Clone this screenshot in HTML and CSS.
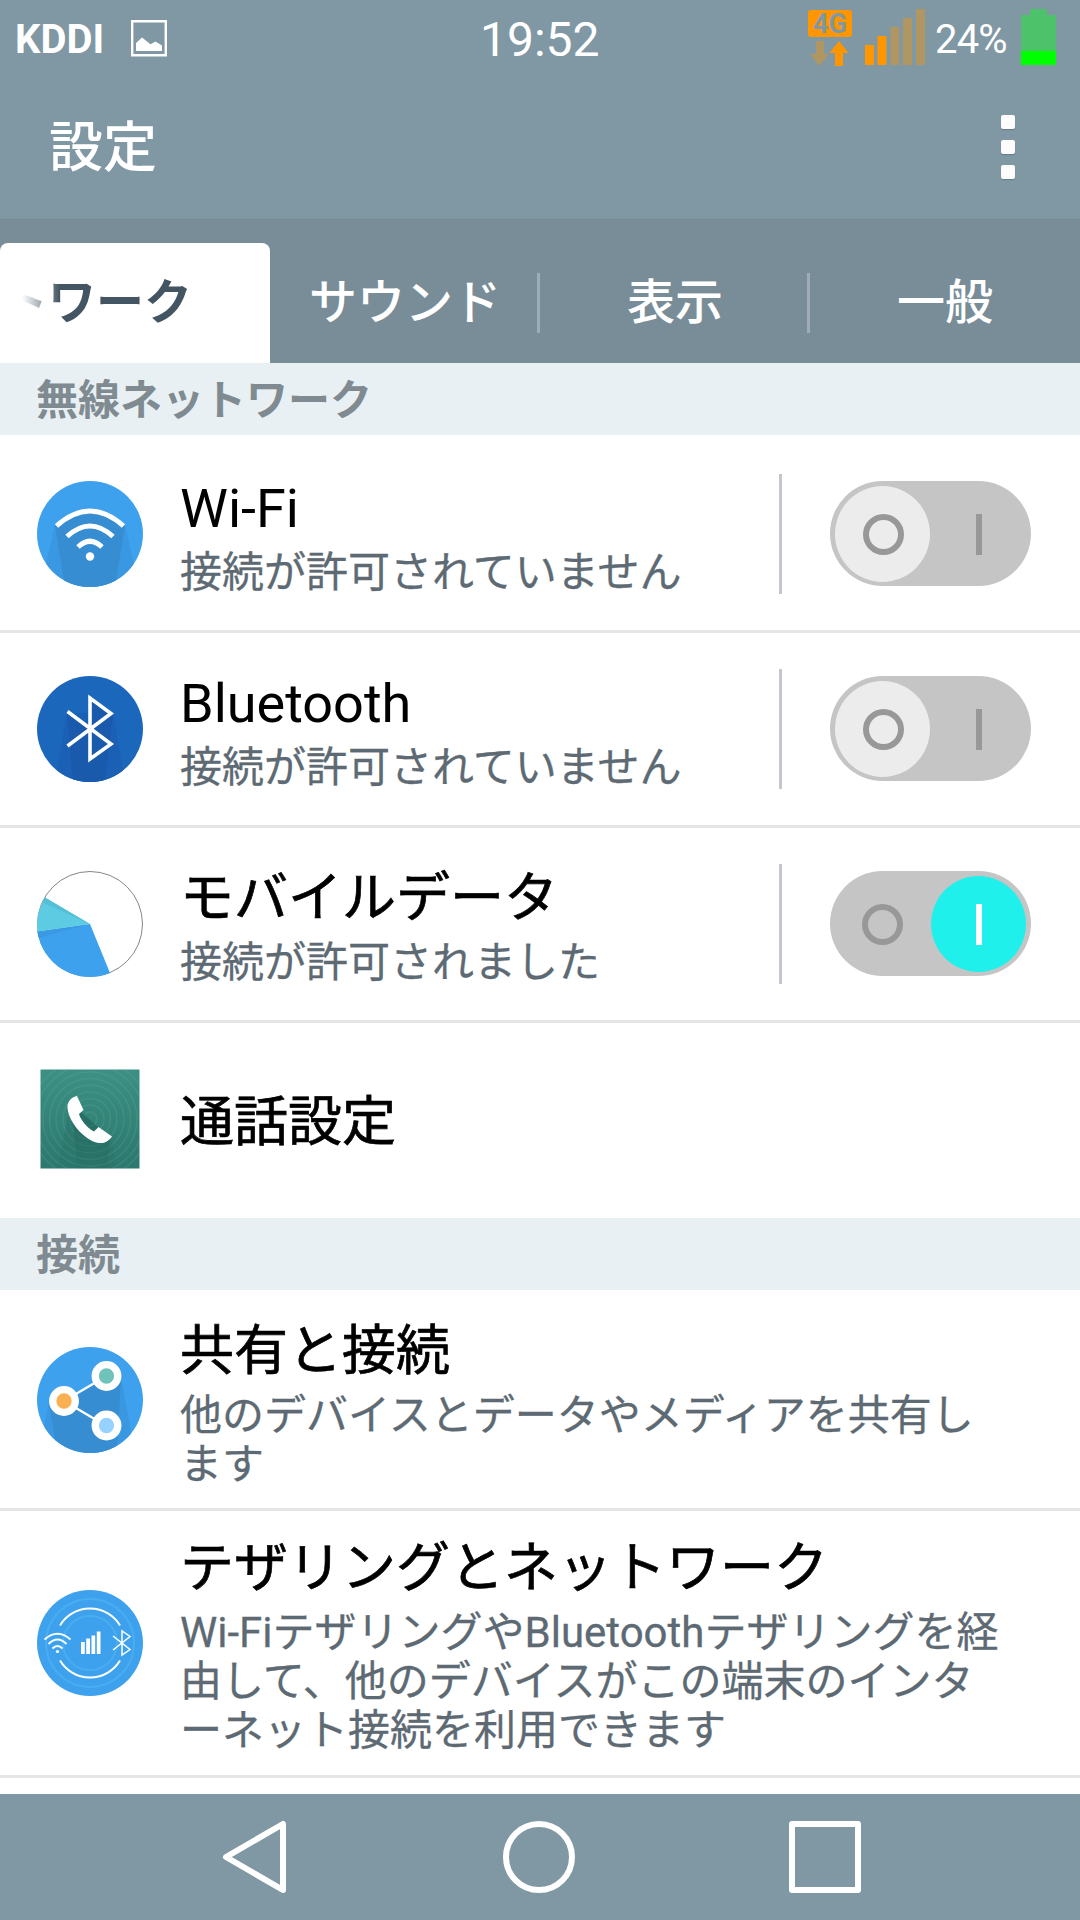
FILE: index.html
```html
<!DOCTYPE html>
<html lang="ja">
<head>
<meta charset="utf-8">
<title>設定</title>
<link rel="stylesheet" href="styles.css">
</head>
<body>
<div class="screen">
  <header class="top">
    <div class="status">
      <span class="carrier">KDDI</span>
      <svg class="picture" width="36" height="37" viewBox="0 0 36 37"><path d="M1.2 1.2H34.8V35.3H1.2Z" fill="none" stroke="#fff" stroke-width="2.4"/><path d="M5 31V23L11 17.5L19.5 24.2L24.5 21.5L31 25.5V31Z" fill="#fff"/></svg>
      <span class="clock">19:52</span>
      <div class="network">
        <span class="badge">4G</span>
        <svg width="40" height="25" viewBox="0 0 40 25"><path d="M6 0H14V13H19L9.500 25L0 13H6Z" fill="#b09663"/><path d="M29 0L38.500 12H33V25H25V12H19.500Z" fill="#ff9600"/></svg>
      </div>
      <svg class="signal" width="60" height="56" viewBox="0 0 60 56"><path d="M0 36H9V56H0ZM12.500 27H21.500V56H12.500Z" fill="#ff9600"/><path d="M25.500 18H34.300V56H25.500ZM38 9H47V56H38ZM51 0H60V56H51Z" fill="#b09663"/></svg>
      <span class="percent">24%</span>
      <svg class="battery" width="35" height="56" viewBox="0 0 35 56"><path d="M9 0H26V6H35V42H0V6H9Z" fill="#4dc26b"/><path d="M0 42H35V56H0Z" fill="#0f0"/></svg>
    </div>
    <div class="titlebar">
      <h1>設定</h1>
      <div class="more"><i></i><i></i><i></i></div>
    </div>
  </header>

  <nav class="tabs">
    <div class="tab active"><span>トワーク</span></div>
    <div class="tab split">サウンド</div>
    <div class="tab split">表示</div>
    <div class="tab">一般</div>
  </nav>

  <main class="list">
    <h2 class="section">無線ネットワーク</h2>
    <div class="row first">
      <svg class="icon" viewBox="0 0 106 106">
        <defs><clipPath id="disc"><circle cx="53" cy="53" r="53"/></clipPath></defs>
        <g clip-path="url(#disc)"><path d="M0 0H106V106H0Z" fill="#3da1ee"/><path d="M18 44L4 106H102L88 44Z" fill="#3998e1"/><path d="M18 44Q53 14 88 44L78 106H28Z" fill="#368dd2"/></g>
        <g fill="none" stroke="#fff" stroke-width="5"><path d="M19.500 45Q53 15 86.500 45"/><path d="M30 55.500Q53 34.500 76 55.500"/><path d="M41 66Q53 54.500 65 66"/></g><circle cx="53" cy="75.500" r="4.200" fill="#fff"/>
      </svg>
      <div class="text"><div class="name latin">Wi-Fi</div><div class="desc">接続が許可されていません</div></div>
      <div class="control"><div class="switch"><span class="knob"></span><span class="ring"></span><span class="bar"></span></div></div>
    </div>
    <div class="row">
      <svg class="icon" viewBox="0 0 106 106">
        <g clip-path="url(#disc)"><path d="M0 0H106V106H0Z" fill="#1b67bc"/><path d="M30 37L18 106H88L76 37Z" fill="#1a60b4"/><path d="M30 37L53 53V20L76 37L68 106H36Z" fill="#195aac"/></g>
        <path d="M30.500 35.500L74 68L53 83V22L74 37.500L30.500 70" fill="none" stroke="#fff" stroke-width="3.600"/>
      </svg>
      <div class="text"><div class="name latin">Bluetooth</div><div class="desc">接続が許可されていません</div></div>
      <div class="control"><div class="switch"><span class="knob"></span><span class="ring"></span><span class="bar"></span></div></div>
    </div>
    <div class="row">
      <svg class="icon" viewBox="0 0 106 106">
        <circle cx="53" cy="53" r="52.500" fill="#fff" stroke="#80868c"/>
        <path d="M53 53L.4 60.500A53 53 0 0 0 73 102Z" fill="#3da1ee"/><path d="M53 53L.4 60.500L1.800 67Z" fill="#3b99e3"/>
        <path d="M53 53L.4 60.500A53 53 0 0 1 8 26.500Z" fill="#5dcce3"/><path d="M53 53L8 26.500L5.500 31.500Z" fill="#55bfd6"/>
      </svg>
      <div class="text"><div class="name">モバイルデータ</div><div class="desc">接続が許可されました</div></div>
      <div class="control"><div class="switch on"><span class="knob"></span><span class="ring"></span><span class="bar"></span></div></div>
    </div>
    <div class="row single">
      <svg class="icon" viewBox="0 0 106 106">
        <defs><linearGradient id="teal" x2="0" y2="1"><stop stop-color="#3d9184"/><stop offset="1" stop-color="#2b776d"/></linearGradient><linearGradient id="shade" x2="0" y2="1"><stop stop-color="#1e5f57" stop-opacity=".6"/><stop offset="1" stop-color="#1e5f57" stop-opacity=".15"/></linearGradient><clipPath id="tile"><path d="M3.500 3.500H102.500V102.500H3.500Z"/></clipPath></defs>
        <g clip-path="url(#tile)"><path d="M0 0H106V106H0Z" fill="url(#teal)"/>
        <g fill="none" stroke="#75b5a8" stroke-opacity=".2" stroke-width="1.500"><circle cx="53" cy="53" r="7"/><circle cx="53" cy="53" r="14"/><circle cx="53" cy="53" r="20.500"/><circle cx="53" cy="53" r="27"/><circle cx="53" cy="53" r="34"/><circle cx="53" cy="53" r="40.500"/><circle cx="53" cy="53" r="47"/><circle cx="53" cy="53" r="54"/><circle cx="53" cy="53" r="60"/></g>
        <path d="M31 50L20 103H80L74 72L44 46Z" fill="url(#shade)" opacity=".5"/><path d="M36 56L40 103H70L73 72L44 46Z" fill="url(#shade)" opacity=".8"/></g>
        <path d="M40 30L46.500 44L42 48C44 55 51 62.500 57 65.500L61.500 61L75 70.500C71 76 67 77.500 62 77C47 75 30 54 30.500 40C30.800 35 35 31 40 30Z" fill="#fff"/>
      </svg>
      <div class="text"><div class="name">通話設定</div></div>
    </div>
    <h2 class="section">接続</h2>
    <div class="row share">
      <svg class="icon" viewBox="0 0 106 106">
        <g clip-path="url(#disc)"><path d="M0 0H106V106H0Z" fill="#3da1ee"/><path d="M12 55L5 90L50 106H98L84 30Z" fill="#3998e1"/><path d="M12 55L20 106H80L84 30Q75 38 55 37L27 55Z" fill="#368dd2"/></g>
        <path d="M69.500 29L27 54L69.500 79" fill="none" stroke="#fff" stroke-width="2.300"/>
        <g stroke="#fff" stroke-width="7.300"><circle cx="69.500" cy="29" r="11.300" fill="#70c3bb"/><circle cx="27" cy="54" r="11.300" fill="#f8b053"/><circle cx="69.500" cy="78.500" r="11.300" fill="#96d1ff"/></g>
      </svg>
      <div class="text"><div class="name">共有と接続</div><div class="desc">他のデバイスとデータやメディアを共有し<br>ます</div></div>
    </div>
    <div class="row tether">
      <svg class="icon" viewBox="0 0 106 106">
        <circle cx="53" cy="53" r="53" fill="#3da1ee"/><g fill="none" stroke="#49adf0" stroke-width="2"><circle cx="53" cy="53" r="44"/><circle cx="53" cy="53" r="27"/></g>
        <g fill="none" stroke="#fff" stroke-width="2"><path d="M23 35.500A35 35 0 0 1 83 35.500M23 70.500A35 35 0 0 0 83 70.500"/><path d="M7.500 49.500Q20.500 38 33.500 49.500M11.500 54Q20.500 45 29.500 54M15.500 58.500Q20.500 53.500 25.500 58.500"/></g>
        <circle cx="20.500" cy="61.500" r="1.600" fill="#fff"/>
        <path d="M44 52H47.800V64H44ZM49.200 48.500H53V64H49.200ZM54.500 45.500H58.200V64H54.500ZM59.800 41.500H63.500V64H59.800Z" fill="#fff"/>
        <path d="M76 46L93 59.500L85 65V41L93 46.500L76 60" fill="none" stroke="#fff" stroke-width="1.500"/>
      </svg>
      <div class="text"><div class="name">テザリングとネットワーク</div><div class="desc">Wi-FiテザリングやBluetoothテザリングを経<br>由して、他のデバイスがこの端末のインタ<br>ーネット接続を利用できます</div></div>
    </div>
  </main>

  <footer class="softkeys">
    <svg width="72" height="78" viewBox="0 0 72 78"><path d="M62 6V72L5 39Z" fill="none" stroke="#fff" stroke-width="6" stroke-linejoin="round"/></svg>
    <svg width="72" height="78" viewBox="0 0 72 78"><circle cx="36" cy="39" r="33" fill="none" stroke="#fff" stroke-width="6"/></svg>
    <svg width="72" height="78" viewBox="0 0 72 78"><path d="M3 6H69V72H3Z" fill="none" stroke="#fff" stroke-width="6" stroke-linejoin="round"/></svg>
  </footer>
</div>
</body>
</html>
```
FILE: styles.css
```css
* { box-sizing: border-box; }
body { margin: 0; background: #fff; font-family: Roboto, "Noto Sans CJK JP", sans-serif; }
.screen { width: 1080px; height: 1920px; display: flex; flex-direction: column; overflow: hidden; }
svg { display: block; flex: none; }
h1, h2 { margin: 0; }

.top { height: 219px; flex: none; background: #8097a4; color: #fff; }
.status { height: 76px; display: flex; align-items: flex-start; padding-left: 15px; white-space: nowrap; }
.carrier { font-size: 40px; line-height: 48px; font-weight: 700; margin-top: 16px; width: 116px; }
.picture { margin-top: 20px; }
.clock { font-size: 48px; line-height: 56px; margin: 12px 0 0 313px; width: 122px; }
.network { margin: 10px 0 0 206px; width: 44px; display: flex; flex-direction: column; align-items: center; gap: 4px; }
.badge { width: 44px; height: 27px; border-radius: 3px; background: #ff9600; color: #8097a4; font-size: 27px; line-height: 28px; font-weight: 700; text-align: center; }
.signal { margin: 9px 0 0 13px; }
.percent { font-size: 40px; line-height: 48px; margin: 16px 0 0 10px; width: 86px; letter-spacing: -.8px; }
.battery { margin-top: 9px; }
.titlebar { height: 143px; display: flex; justify-content: space-between; padding: 30px 65px 0 49px; }
h1 { font-size: 54px; line-height: 78px; font-weight: 500; padding-top: 4px; }
.more { display: flex; flex-direction: column; gap: 11px; padding-top: 9px; }
.more i { width: 14px; height: 14px; border-radius: 2px; background: #fcfcfc; box-shadow: 0 1px 1px #657b87; }

.tabs { height: 144px; flex: none; display: grid; grid-template-columns: repeat(4, 270px); padding-top: 24px; background: #788d98; box-shadow: inset 0 1px #758a95; }
.tab { display: flex; align-items: center; justify-content: center; color: #fff; font-size: 48px; line-height: 60px; font-weight: 500; }
.tab.split { background: linear-gradient(#9eacb6, #9eacb6) right 30px / 3px 60px no-repeat; }
.tab.active { background: #fff; color: #435562; border-radius: 8px 8px 0 0; font-weight: 700; justify-content: flex-start; }
.tab.active span { -webkit-mask-image: linear-gradient(90deg, transparent 22px, #000 60px); mask-image: linear-gradient(90deg, transparent 22px, #000 60px); }

.list { height: 1431px; flex: none; overflow: hidden; }
.section { height: 72px; background: #e8f0f4; color: #7f8b90; font-size: 42px; line-height: 75px; font-weight: 700; padding-left: 36px; }
.row { height: 195px; border-bottom: 3px solid #e5e5e5; display: flex; align-items: center; padding: 0 49px 0 37px; }
.row.first { height: 198px; padding-top: 2px; }
.row.single { border-bottom: 0; padding-bottom: 3px; }
.row.share { height: 221px; padding-top: 1px; }
.row.tether { height: 267px; }
.icon { width: 106px; height: 106px; margin-right: 37px; }
.text { flex: 1; white-space: nowrap; padding-top: 6px; }
.first .text { padding-top: 7px; }
.share .text { padding-top: 9px; }
.name { color: #000; font-size: 54px; line-height: 63px; -webkit-text-stroke: .7px #000; }
.name.latin { -webkit-text-stroke: 0; }
.desc { color: #5d6a73; font-size: 42px; line-height: 49px; margin-top: 8px; -webkit-text-stroke: .3px #5d6a73; }
.control { height: 120px; width: 252px; border-left: 3px solid #c4c8cc; display: flex; align-items: flex-start; justify-content: flex-end; padding-top: 7px; }
.switch { position: relative; width: 201px; height: 105px; border-radius: 53px; background: #c5c5c5; }
.knob { position: absolute; left: 5px; top: 5px; width: 95px; height: 96px; border-radius: 50%; background: #ececec; }
.ring { position: absolute; left: 33px; top: 33px; width: 41px; height: 41px; border: 6px solid #989898; border-radius: 50%; }
.bar { position: absolute; left: 146px; top: 33px; width: 6px; height: 41px; background: #989898; }
.on .knob { left: 101px; background: #1ff0eb; }
.on .ring { left: 32px; }
.on .bar { background: #fff; }

.softkeys { flex: 1; background: #8097a4; display: grid; grid-template-columns: 282px 286px 72px; align-items: center; padding-left: 221px; }
```
